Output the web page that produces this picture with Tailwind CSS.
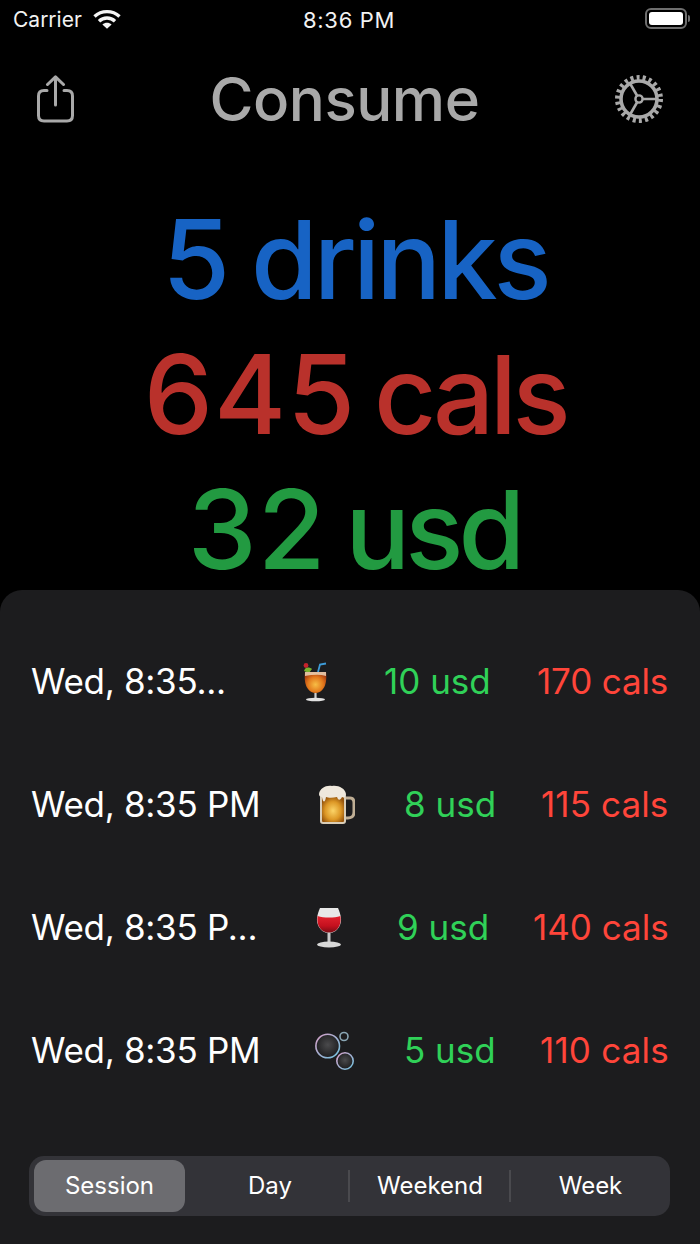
<!DOCTYPE html>
<html lang="en">
<head>
    <meta charset="UTF-8">
    <title>Consume</title>
    <script src="https://cdn.jsdelivr.net/npm/@tailwindcss/browser@4"></script>
</head>
<body class="bg-black">
<div class="w-[700px] h-[1244px] overflow-hidden flex flex-col bg-black text-white font-['Inter','Roboto',sans-serif]">

    <!-- status bar -->
    <div class="h-[40px] pt-[8px] pl-[13px] pr-[10px] flex items-start relative">
        <span class="text-[21px] leading-[24px] text-[#f2f2f2]">Carrier</span>
        <svg class="ml-[11px] mt-[1px]" width="28" height="20" viewBox="0 0 28 20" fill="none" stroke="#f5f5f5" stroke-width="3.4">
            <path d="M1.5 7.5C8.5 1 19.5 1 26.5 7.5"/>
            <path d="M6 12.2C10.5 8 17.5 8 22 12.2"/>
            <path d="M14 19.8L9.4 15.4C12 13.2 16 13.2 18.6 15.4Z" fill="#f5f5f5" stroke="none"/>
        </svg>
        <span class="absolute left-[303px] top-[8px] text-[22px] leading-[24px] tracking-[0.7px] text-[#f2f2f2]">8:36 PM</span>
        <div class="ml-auto flex items-center">
            <div class="w-[42px] h-[21px] rounded-[6px] border-2 border-[#6e6e6e] p-[2px]">
                <div class="w-full h-full rounded-[3px] bg-white"></div>
            </div>
            <div class="w-[2px] h-[7px] ml-[1px] rounded-r bg-[#6e6e6e]"></div>
        </div>
    </div>

    <!-- header -->
    <div class="h-[118px] px-[37px] flex items-center justify-between">
        <svg width="38" height="48" viewBox="0 0 38 48" fill="none" stroke="#a9a9a9" stroke-width="3" stroke-linecap="round" stroke-linejoin="round">
            <path d="M10 15.5H7C3.5 15.5 1.5 17.5 1.5 21V40.5C1.5 44 3.5 46 7 46H30C33.5 46 35.5 44 35.5 40.5V21C35.5 17.5 33.5 15.5 30 15.5H27"/>
            <path d="M18.5 30V2.5"/>
            <path d="M10.5 9.5L18.5 1.8L26.5 9.5"/>
        </svg>
        <span class="text-[60px] leading-none font-medium text-[#a9a9a9] tracking-[-0.5px]">Consume</span>
        <svg class="mr-[-1px]" width="50" height="50" viewBox="0 0 50 50" fill="none" stroke="#a9a9a9">
            <circle cx="25" cy="25" r="21.5" stroke-width="5" stroke-dasharray="3 3.14"/>
            <circle cx="25" cy="25" r="18" stroke-width="3.6"/>
            <circle cx="25" cy="25" r="3.6" stroke-width="2.4"/>
            <path d="M29 25H42M23 21.5L15.5 8.5M23 28.5L15.5 41.5" stroke-width="2.6"/>
        </svg>
    </div>

    <!-- totals -->
    <div class="h-[432px] pt-[34px] pl-[14px] flex flex-col items-center text-[108px] font-medium">
        <div class="h-[135px] leading-[135px] whitespace-nowrap text-[#1763c4] pr-[4px] [word-spacing:-9px]"><span class="text-[110px] tracking-[1px]">5</span> <span class="tracking-[-4px]">drinks</span></div>
        <div class="h-[135px] leading-[135px] whitespace-nowrap text-[#b9312b] pr-[4px] [word-spacing:-11px]"><span class="text-[110px] tracking-[1px]">645</span> <span class="tracking-[-4.5px]">cals</span></div>
        <div class="h-[135px] leading-[135px] whitespace-nowrap text-[#229a41] pr-[6px] [word-spacing:-10px]"><span class="text-[110px] tracking-[1px]">32</span> <span class="tracking-[-5px]">usd</span></div>
    </div>

    <!-- list sheet -->
    <div class="flex-1 rounded-t-[22px] bg-[#1c1c1e] pt-[30px] flex flex-col">
        <div class="h-[123px] flex items-center text-[35px]">
            <span class="ml-[31px] w-[240px] whitespace-nowrap tracking-[-0.3px]">Wed, 8:35...</span>
            <svg class="ml-[30px]" width="30" height="40" viewBox="0 0 30 40">
                <defs>
                    <radialGradient id="cocktail" cx="0.5" cy="0.6" r="0.6">
                        <stop offset="0" stop-color="#f7bd45"/>
                        <stop offset="0.6" stop-color="#e2781c"/>
                        <stop offset="1" stop-color="#a83c10"/>
                    </radialGradient>
                </defs>
                <path d="M17 10L19 2.5L25 1.5" fill="none" stroke="#3d9bd8" stroke-width="1.8"/>
                <circle cx="5" cy="3.5" r="2.4" fill="#c5232c"/>
                <path d="M3 9C4 5 8 4.5 11 7L8 11Z" fill="#79b32f"/>
                <path d="M4 10H25C26 18 25 30 14.5 31C4 30 3 18 4 10Z" fill="url(#cocktail)"/>
                <path d="M4 10H25L25 14C18 12 11 13 4 14Z" fill="#f4ead0" opacity="0.75"/>
                <rect x="13.4" y="31" width="2.2" height="6" fill="#cfcfcf"/>
                <ellipse cx="14.5" cy="37.5" rx="9.5" ry="1.8" fill="#e2e2e2"/>
            </svg>
            <span class="ml-[53px] w-[106px] whitespace-nowrap text-[#30d158]">10 usd</span>
            <span class="ml-[47px] whitespace-nowrap text-[#ff453a] tracking-[-0.15px]">170 cals</span>
        </div>
        <div class="h-[123px] flex items-center text-[35px]">
            <span class="ml-[31px] w-[240px] whitespace-nowrap tracking-[-0.3px]">Wed, 8:35 PM</span>
            <svg class="ml-[47px]" width="37" height="40" viewBox="0 0 37 40">
                <defs>
                    <radialGradient id="beer" cx="0.5" cy="0.55" r="0.6">
                        <stop offset="0" stop-color="#fbd468"/>
                        <stop offset="0.6" stop-color="#dd9826"/>
                        <stop offset="1" stop-color="#96540c"/>
                    </radialGradient>
                </defs>
                <path d="M27 13H32C35 13 36 15 36 18V27C36 31 34 33 30 33H27" fill="none" stroke="#bfae95" stroke-width="3"/>
                <rect x="2" y="9" width="26" height="30" rx="3" fill="#d9cdb8"/>
                <rect x="4" y="12" width="22" height="25" rx="1" fill="url(#beer)"/>
                <path d="M1 9C2 3 8 0 14 1C20 0 27 3 28 9C28 12 26 13 24 12C22 16 20 15 19 12C15 13 10 13 8 12C7 18 5 18 4 12C2 12 1 11 1 9Z" fill="#efe8dc"/>
            </svg>
            <span class="ml-[49px] w-[90px] whitespace-nowrap text-[#30d158]">8 usd</span>
            <span class="ml-[47px] whitespace-nowrap text-[#ff453a] tracking-[0.1px]">115 cals</span>
        </div>
        <div class="h-[123px] flex items-center text-[35px]">
            <span class="ml-[31px] w-[240px] whitespace-nowrap tracking-[-0.3px]">Wed, 8:35 P...</span>
            <svg class="ml-[43px]" width="30" height="40" viewBox="0 0 30 40">
                <defs>
                    <linearGradient id="wine" x1="0" x2="0" y1="0" y2="1">
                        <stop offset="0" stop-color="#e2222e"/>
                        <stop offset="0.6" stop-color="#c4101e"/>
                        <stop offset="1" stop-color="#7a0c14"/>
                    </linearGradient>
                </defs>
                <path d="M6 0H24C27 7 28 12 26 17C24 22 20 25 15 25C10 25 6 22 4 17C2 12 3 7 6 0Z" fill="#e8e8e8"/>
                <path d="M3.6 8C10 10 20 10 26.4 8C27 12 26.5 15 25.5 17.5C23.5 22 20 24.6 15 24.6C10 24.6 6.5 22 4.5 17.5C3.5 15 3 12 3.6 8Z" fill="url(#wine)"/>
                <rect x="13.5" y="25" width="3" height="10" fill="#c9c9c9"/>
                <ellipse cx="15" cy="36.5" rx="12" ry="3" fill="#d8d8d8"/>
            </svg>
            <span class="ml-[53px] w-[90px] whitespace-nowrap text-[#30d158]">9 usd</span>
            <span class="ml-[46px] whitespace-nowrap text-[#ff453a]">140 cals</span>
        </div>
        <div class="h-[123px] flex items-center text-[35px]">
            <span class="ml-[31px] w-[240px] whitespace-nowrap tracking-[-0.3px]">Wed, 8:35 PM</span>
            <svg class="ml-[43px]" width="42" height="40" viewBox="0 0 42 40" fill="none" stroke-width="1.6">
                <defs>
                    <radialGradient id="bubble" cx="0.5" cy="0.45" r="0.55">
                        <stop offset="0" stop-color="#4a4a4c"/>
                        <stop offset="1" stop-color="#1c1c1e"/>
                    </radialGradient>
                    <linearGradient id="rim" x1="0" x2="1" y1="0" y2="1">
                        <stop offset="0" stop-color="#d8a0c8"/>
                        <stop offset="1" stop-color="#6fc0dc"/>
                    </linearGradient>
                </defs>
                <circle cx="13.7" cy="15" r="11.8" fill="url(#bubble)" stroke="url(#rim)"/>
                <circle cx="30" cy="5.5" r="4" stroke="#8aa6b4"/>
                <circle cx="31" cy="30" r="8.2" fill="url(#bubble)" stroke="url(#rim)"/>
            </svg>
            <span class="ml-[48px] w-[90px] whitespace-nowrap text-[#30d158]">5 usd</span>
            <span class="ml-[46px] whitespace-nowrap text-[#ff453a] tracking-[0.2px]">110 cals</span>
        </div>

        <!-- segmented control -->
        <div class="mt-[44px] ml-[29px] mr-[30px] h-[60px] py-[4px] pl-[5px] rounded-[15px] bg-[#333338] flex items-stretch text-[24px]">
            <div class="w-[151px] rounded-[12px] bg-[#6c6c70] flex items-center justify-center">Session</div>
            <div class="w-[165px] pl-[7px] flex items-center justify-center border-r-2 border-[#4a4a4e] my-[10px]">Day</div>
            <div class="w-[161px] pl-[1px] flex items-center justify-center border-r-2 border-[#4a4a4e] my-[10px]">Weekend</div>
            <div class="flex-1 flex items-center justify-center">Week</div>
        </div>
    </div>
</div>
</body>
</html>
